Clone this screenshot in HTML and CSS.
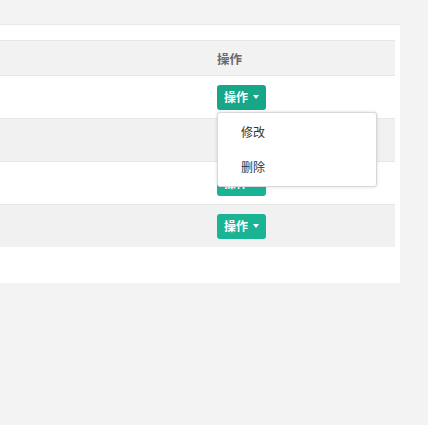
FILE: index.html
```html
<!DOCTYPE html>
<html lang="zh">
<head>
<meta charset="utf-8">
<link rel="stylesheet" href="styles.css">
</head>
<body>
<div class="panel">
  <table class="table">
    <colgroup><col class="c1"><col class="c2"></colgroup>
    <thead>
      <tr><th></th><th>操作</th></tr>
    </thead>
    <tbody>
      <tr><td></td><td>
        <div class="dd">
          <button class="btn active">操作<span class="caret"></span></button>
          <ul class="menu">
            <li>修改</li>
            <li>删除</li>
          </ul>
        </div>
      </td></tr>
      <tr class="odd"><td></td><td></td></tr>
      <tr><td></td><td><button class="btn">操作<span class="caret"></span></button></td></tr>
      <tr class="odd"><td></td><td><button class="btn">操作<span class="caret"></span></button></td></tr>
    </tbody>
  </table>
</div>
</body>
</html>
```
FILE: styles.css
```css
html, body {
  margin: 0;
  padding: 0;
  background: #f3f3f3;
  font-family: "Open Sans", "Noto Sans CJK SC", sans-serif;
  color: #676a6c;
}
body {
  padding-top: 24px;
}
.panel {
  width: 395px;
  padding: 15px 5px 36px 0;
  background: #fff;
  border-top: 1px solid #e7eaec;
}
.table {
  width: 395px;
  border-collapse: collapse;
  table-layout: fixed;
}
.c1 { width: 209px; }
.table th, .table td {
  padding: 0 8px;
  text-align: left;
  vertical-align: middle;
  border-top: 1px solid #e7e7e7;
}
.table th {
  height: 34px;
  background: #f2f2f2;
  font-family: "Noto Sans CJK SC", sans-serif;
  font-size: 12.5px;
  font-weight: bold;
  color: #676a6c;
  border-bottom: 1px solid #e7e7e7;
}
.table td {
  height: 42px;
}
.table tbody tr:first-child td { border-top: none; height: 42px; }
.table tr.odd td { background: #f1f1f1; }
.dd {
  position: relative;
}
.btn {
  display: inline-flex;
  align-items: center;
  height: 25px;
  width: 49px;
  padding: 0 0 0 7px;
  border: none;
  border-radius: 3px;
  background: #1ab394;
  color: #fff;
  font-family: "Noto Sans CJK SC", sans-serif;
  font-size: 12px;
  font-weight: bold;
  line-height: 1;
  cursor: pointer;
}
.btn.active {
  background: #18a689;
}
.caret {
  display: inline-block;
  width: 0;
  height: 0;
  margin-left: 5px;
  border-top: 4px solid #fff;
  border-left: 3.5px solid transparent;
  border-right: 3.5px solid transparent;
}
.menu {
  position: absolute;
  left: 0;
  top: 27px;
  width: 158px;
  margin: 0;
  padding: 1px 0 2px;
  list-style: none;
  background: #fff;
  border: 1px solid #d6d8da;
  border-radius: 3px;
  box-shadow: 0 0 3px rgba(86, 96, 117, 0.25);
  z-index: 5;
}
.menu li {
  height: 35px;
  line-height: 35px;
  padding-left: 23px;
  font-family: "Noto Sans CJK SC", sans-serif;
  font-size: 12px;
  color: #333;
}
```
